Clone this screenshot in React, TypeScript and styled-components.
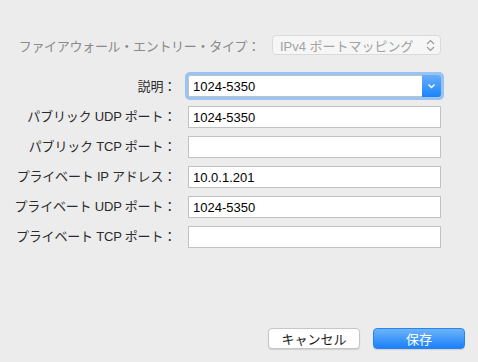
import { Fragment } from "react";
import styled, { createGlobalStyle } from "styled-components";

const GlobalStyle = createGlobalStyle`
  html, body {
    margin: 0;
    padding: 0;
    background: #ececec;
  }
  body {
    font-family: "Liberation Sans", "Noto Sans CJK JP", sans-serif;
    -webkit-font-smoothing: antialiased;
  }
`;

const Page = styled.div`
  width: 478px;
  height: 362px;
  background: #ececec;
  display: flex;
  flex-direction: column;
  box-sizing: border-box;
  overflow: hidden;
`;

const TopRow = styled.div`
  margin-top: 35px;
  padding-right: 37px;
  display: flex;
  justify-content: flex-end;
  align-items: center;
  gap: 12px;
`;

const TopLabel = styled.span`
  font-size: 13px;
  color: #8a8a8a;
  letter-spacing: -0.3px;
`;

const Popup = styled.div`
  width: 169px;
  height: 20px;
  box-sizing: border-box;
  border: 1px solid #dadada;
  border-radius: 4px;
  background: #f6f6f6;
  display: flex;
  align-items: center;
  justify-content: space-between;
  padding: 0 5px 0 7px;
  font-size: 13px;
  color: #a3a3a3;
`;

const Form = styled.div`
  margin-top: 20px;
  display: grid;
  grid-template-columns: 176px 253px;
  column-gap: 12px;
  row-gap: 8px;
  align-items: center;
`;

const Label = styled.label`
  font-size: 13px;
  color: #2a2a2a;
  text-align: right;
  white-space: nowrap;
  line-height: 22px;
  letter-spacing: -0.2px;
`;

const Field = styled.div<{ $first?: boolean }>`
  height: 22px;
  box-sizing: border-box;
  border: 1px solid #c2c2c2;
  background: #fff;
  font-size: 13px;
  color: #000;
  padding-left: 4px;
  display: flex;
  align-items: center;
  margin-bottom: ${(p) => (p.$first ? "1px" : "0")};
`;

const Combo = styled(Field)`
  position: relative;
  border-radius: 2px;
  box-shadow: 0 0 0 3px #98c3f3;
`;

const ComboButton = styled.div`
  position: absolute;
  right: -1px;
  top: -1px;
  bottom: -1px;
  width: 19px;
  border-radius: 0 3px 3px 0;
  background: linear-gradient(#67aefa, #1d83fb);
  display: flex;
  align-items: center;
  justify-content: center;
`;

const ButtonRow = styled.div`
  margin-top: auto;
  padding: 0 13px 13px 0;
  display: flex;
  justify-content: flex-end;
  gap: 13px;
`;

const Button = styled.button<{ $primary?: boolean }>`
  width: 92px;
  height: 21px;
  box-sizing: border-box;
  border-radius: 4px;
  font-family: "Liberation Sans", "Noto Sans CJK JP", sans-serif;
  font-size: 13px;
  padding: 0;
  cursor: pointer;
  border: 1px solid ${(p) => (p.$primary ? "#2a84f0" : "#c6c6c6")};
  background: ${(p) =>
    p.$primary ? "linear-gradient(#6cb4fb, #1a80fb)" : "#ffffff"};
  color: ${(p) => (p.$primary ? "#ffffff" : "#1a1a1a")};
  box-shadow: 0 1px 1px rgba(0, 0, 0, 0.12);
`;

const rows = [
  { label: "パブリック UDP ポート：", value: "1024-5350" },
  { label: "パブリック TCP ポート：", value: "" },
  { label: "プライベート IP アドレス：", value: "10.0.1.201" },
  { label: "プライベート UDP ポート：", value: "1024-5350" },
  { label: "プライベート TCP ポート：", value: "" },
];

export default function App() {
  return (
    <Page>
      <GlobalStyle />
      <TopRow>
        <TopLabel>ファイアウォール・エントリー・タイプ：</TopLabel>
        <Popup>
          <span>IPv4 ポートマッピング</span>
          <svg width="9" height="13" viewBox="0 0 9 13">
            <path d="M1 5 L4.5 1.5 L8 5" fill="none" stroke="#9a9a9a" strokeWidth="1.2" />
            <path d="M1 8 L4.5 11.5 L8 8" fill="none" stroke="#9a9a9a" strokeWidth="1.2" />
          </svg>
        </Popup>
      </TopRow>
      <Form>
        <Label>説明：</Label>
        <Combo $first>
          1024-5350
          <ComboButton>
            <svg width="9" height="6" viewBox="0 0 9 6">
              <path d="M1.5 1.5 L4.5 4.5 L7.5 1.5" fill="none" stroke="#fff" strokeWidth="1.4" />
            </svg>
          </ComboButton>
        </Combo>
        {rows.map((r) => (
          <Fragment key={r.label}>
            <Label>{r.label}</Label>
            <Field>{r.value}</Field>
          </Fragment>
        ))}
      </Form>
      <ButtonRow>
        <Button>キャンセル</Button>
        <Button $primary>保存</Button>
      </ButtonRow>
    </Page>
  );
}
